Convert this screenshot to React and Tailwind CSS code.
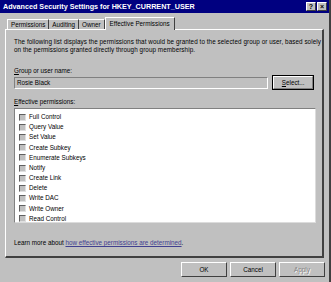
export default function App() {
  const perms = [
    "Full Control",
    "Query Value",
    "Set Value",
    "Create Subkey",
    "Enumerate Subkeys",
    "Notify",
    "Create Link",
    "Delete",
    "Write DAC",
    "Write Owner",
    "Read Control",
  ];
  const font = { fontFamily: '"Liberation Sans", Arial, sans-serif' };
  return (
    <div
      className="w-[331px] h-[282px] bg-[#c0c0c0] flex flex-col overflow-hidden text-[6.3px] text-black border-r-2 border-r-[#404040]"
      style={font}
    >
      {/* Title bar */}
      <div className="h-[13px] bg-[#000080] flex items-center pl-[3px] pr-[2px] shrink-0">
        <span className="text-white font-bold text-[7.2px] leading-none flex-1 whitespace-nowrap">
          Advanced Security Settings for HKEY_CURRENT_USER
        </span>
        <div className="flex gap-[1px]">
          <div className="w-[10px] h-[9px] bg-[#c0c0c0] border border-t-white border-l-white border-r-[#404040] border-b-[#404040] flex items-center justify-center text-[7px] font-bold leading-none">
            ?
          </div>
          <div className="w-[10px] h-[9px] bg-[#c0c0c0] border border-t-white border-l-white border-r-[#404040] border-b-[#404040] flex items-center justify-center text-[7px] font-bold leading-none">
            ×
          </div>
        </div>
      </div>

      {/* Tabs */}
      <div className="flex items-end pl-[7px] mt-[3px] h-[13px] shrink-0">
        <div className="h-[10px] px-[3px] flex items-center border-l border-t border-white border-r border-r-[#404040] whitespace-nowrap">
          Permissions
        </div>
        <div className="h-[10px] px-[3px] flex items-center border-t border-white border-r border-r-[#404040] whitespace-nowrap">
          Auditing
        </div>
        <div className="h-[10px] px-[3px] flex items-center border-t border-white border-r border-r-[#404040] whitespace-nowrap">
          Owner
        </div>
        <div className="h-[13px] px-[4px] flex items-center border-l border-t border-white border-r border-r-[#404040] whitespace-nowrap relative -mb-[1px] bg-[#c0c0c0] z-10">
          Effective Permissions
        </div>
      </div>

      {/* Panel */}
      <div className="ml-[5px] mr-[5px] h-[229px] border-l border-t border-white border-r-2 border-r-[#404040] border-b-2 border-b-[#404040] px-[8px] pt-[8px] shrink-0">
        <p className="leading-[8px] tracking-[0.07px] whitespace-nowrap">
          The following list displays the permissions that would be granted to the selected group or user, based solely
          <br />
          on the permissions granted directly through group membership.
        </p>
        <div className="mt-[13px] leading-[8px]">
          <span className="underline">G</span>roup or user name:
        </div>
        <div className="flex items-start mt-[2px]">
          <div className="w-[257px] h-[12px] border border-t-[#808080] border-l-[#808080] border-r-white border-b-white flex items-center pl-[2px]">
            Rosie Black
          </div>
          <div className="ml-[4px] -mt-[2px] w-[42px] h-[15px] border border-black flex">
            <div className="flex-1 border border-t-white border-l-white border-r-[#808080] border-b-[#808080] flex items-center justify-center">
              <span className="underline">S</span>elect...
            </div>
          </div>
        </div>
        <div className="mt-[8px] leading-[8px]">
          <span className="underline">E</span>ffective permissions:
        </div>
        <div className="mt-[2px] w-[302px] h-[115px] bg-white border border-t-[#808080] border-l-[#808080] border-r-[#dcdcdc] border-b-[#dcdcdc] pt-[3px] pl-[4px]">
          {perms.map((p) => (
            <div key={p} className="h-[10.2px] flex items-center">
              <div className="w-[7px] h-[7px] bg-[#c0c0c0] border border-t-[#606060] border-l-[#606060] border-r-[#e0e0e0] border-b-[#e0e0e0] mr-[3px]" />
              <span className="leading-none">{p}</span>
            </div>
          ))}
        </div>
        <div className="mt-[16px] leading-[8px]">
          Learn more about{" "}
          <span className="text-[#404090] underline">how effective permissions are determined</span>.
        </div>
      </div>

      {/* Buttons */}
      <div className="flex justify-end gap-[3px] mt-[4px] pr-[4px]">
        {["OK", "Cancel", "Apply"].map((b) => (
          <div
            key={b}
            className="w-[46px] h-[15px] border border-t-white border-l-white border-r-[#404040] border-b-[#404040] flex items-center justify-center"
          >
            <span className={b === "Apply" ? "text-[#808080] [text-shadow:1px_1px_0_#fff]" : ""}>{b}</span>
          </div>
        ))}
      </div>
    </div>
  );
}
